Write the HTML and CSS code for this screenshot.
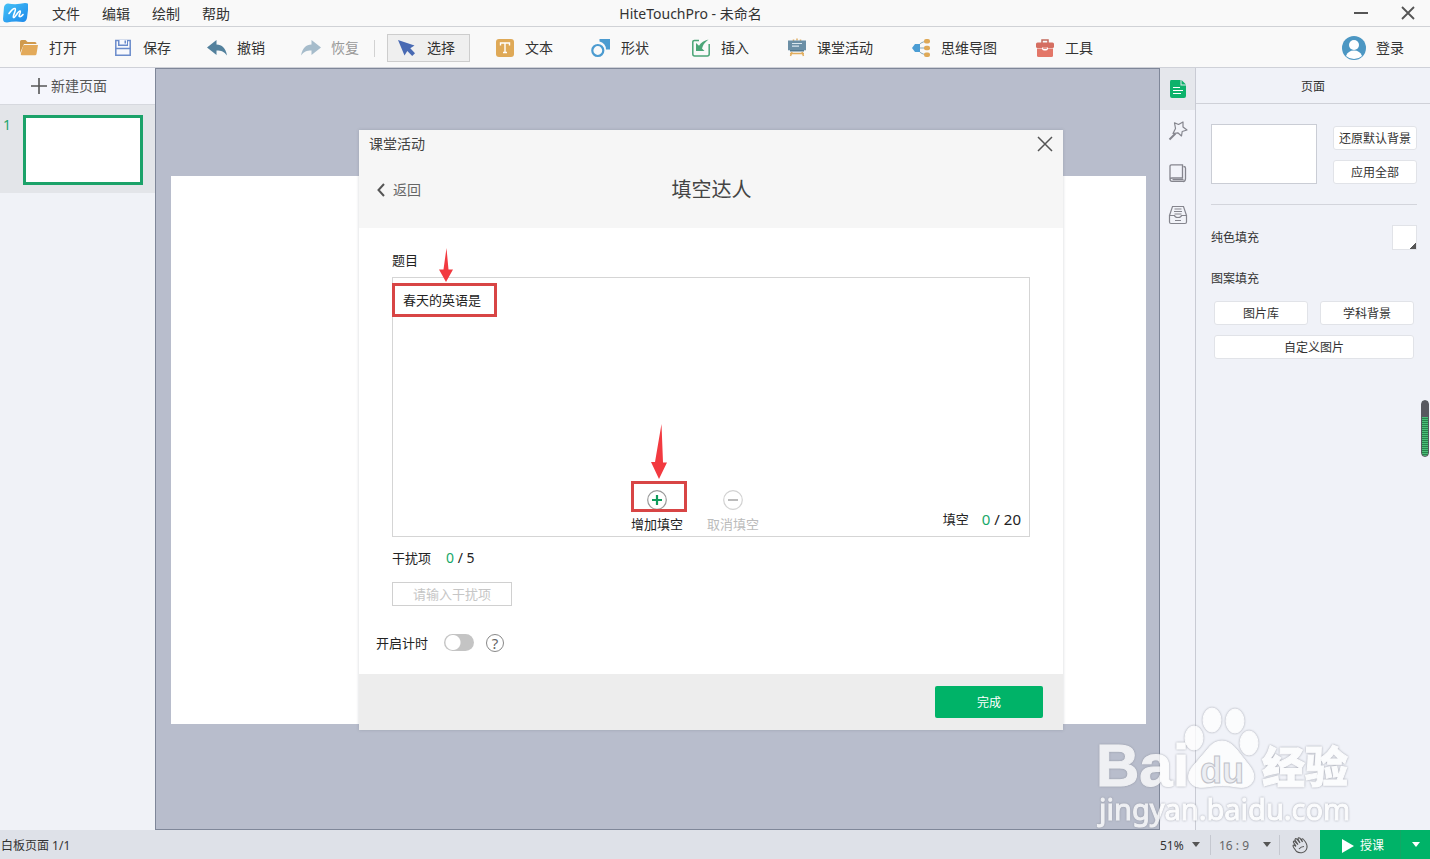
FILE: index.html
```html
<!DOCTYPE html>
<html lang="zh-CN">
<head>
<meta charset="utf-8">
<title>HiteTouchPro - 未命名</title>
<link rel="stylesheet" href="styles.css">
</head>
<body>
<header class="titlebar">
  <svg class="logo" viewBox="0 0 28 26" aria-hidden="true">
    <defs><linearGradient id="logo-fill" x1="0" y1="0" x2="1" y2="1"><stop offset="0" stop-color="#45c3f7"/><stop offset="1" stop-color="#1b86ea"/></linearGradient></defs>
    <path d="M8 3.500Q16 5 25 3q4 0 3.500 3L27 18q-1 4-4 4Q14 21 7 22.500q-4 0-4-3.500L4 7q1-3.500 4-3.500Z" fill="url(#logo-fill)"/>
    <path d="M9 13.500q4-5.500 6-5c2 1-3 8-1.500 9s5-7.500 6.500-6.500-2 5-.5 5.500 2.500-.5 3.500-2" fill="none" stroke="#fff" stroke-width="1.600" stroke-linecap="round"/>
  </svg>
  <nav class="menus">
    <button>文件</button><button>编辑</button><button>绘制</button><button>帮助</button>
  </nav>
  <h1 class="app-title">HiteTouchPro - 未命名</h1>
  <div class="window-controls">
    <button aria-label="最小化"><svg width="16" height="16" viewBox="0 0 16 16"><path d="M1 8h14" stroke="#555" stroke-width="2"/></svg></button>
    <button aria-label="关闭窗口"><svg width="16" height="16" viewBox="0 0 16 16"><path d="M2 2l12 12M14 2 2 14" stroke="#555" stroke-width="1.800"/></svg></button>
  </div>
</header>

<div class="toolbar">
  <div class="tool-group">
    <button class="tool"><svg viewBox="0 0 20 20"><path d="M1 3.500q0-1.500 1.500-1.500h4l2 2h7.500q1.500 0 1.500 2H5L1 15Z" fill="#d09a4d"/><path d="M5.500 7H19l-1.500 9q-.2 1.300-1.500 1.300H3q-1.500 0-1.200-1.500L4 8.200Q4.300 7 5.500 7Z" fill="#e3aa5a"/></svg>打开</button>
    <button class="tool"><svg viewBox="0 0 20 20"><path d="M2.800 2.500H17.200V17.300H2.800Z" fill="#f8f9fd" stroke="#6b8ccb" stroke-width="1.500"/><path d="M5 2h10v6H5Z" fill="#6b8ccb"/><path d="M6.500 2h7.500v4.500H6.500Z" fill="#f8f9fd"/><path d="M11.500 2.500h1.500v3h-1.500Z" fill="#6b8ccb"/><path d="M2.500 10.500h15" stroke="#6b8ccb" stroke-width="1.500"/></svg>保存</button>
    <button class="tool"><svg viewBox="0 0 20 20"><path d="M0 9.500 9.500 2v4.500c5.500 0 9 3.500 10.500 11-3-4-5.500-5-10.500-5V17Z" fill="#53819d"/></svg>撤销</button>
    <button class="tool muted" disabled><svg viewBox="0 0 20 20"><path d="M20 9.500 10.500 2v4.500C5 6.500 1.500 10 0 17.500c3-4 5.500-5 10.500-5V17Z" fill="#a6bccb"/></svg>恢复</button>
  </div>
  <span class="tool-divider"></span>
  <button class="tool selected" aria-pressed="true"><svg viewBox="0 0 20 20"><path d="M1 2l16.500 5.500-4.200 2.800 4.700 5-2.800 2.700-4.900-5-2.800 4.500Z" fill="#496ab3"/></svg>选择</button>
  <div class="tool-group inserts">
    <button class="tool"><svg viewBox="0 0 20 20"><rect x="1" y="1" width="18" height="18" rx="3" fill="#dfa957"/><path d="M5.500 7.500v-2.500h9v2.500M10 5v9.500M8 14.500h4" fill="none" stroke="#fff" stroke-width="1.400"/></svg>文本</button>
    <button class="tool"><svg viewBox="0 0 20 20"><path d="M8.500 1h10.500v10.500h-4a8 8 0 0 0-6.500-8Z" fill="#4b9bd0"/><circle cx="6.800" cy="12.500" r="5.500" fill="none" stroke="#4b9bd0" stroke-width="2.200"/></svg>形状</button>
    <button class="tool spaced"><svg viewBox="0 0 20 20"><path d="M8 2.500H3.500q-1.700 0-1.700 1.500v12q0 2 1.900 2h12.600q1.900 0 1.900-2V6" fill="none" stroke="#4ba577" stroke-width="1.500"/><path d="M5 13V5l3 2.800Q11 3 17.500 1.500 12.500 5 11 10.500L13.500 13Z" fill="#4ba577"/></svg>插入</button>
    <button class="tool"><svg viewBox="0 0 20 20"><path d="M5 14 3.500 18M15 14l1.500 4M3 15.500h14" stroke="#e1ad5d" stroke-width="1.500"/><path d="M6.500 1.500v2M10 .5v2M13.500 1.500v2" stroke="#dfae65" stroke-width="1.500"/><path d="M1 2.500h18v9.800H1Z" fill="#6b8fa6"/><path d="M3 12h14v1.500H3Z" fill="#53788f"/><path d="M5 5.500h10M5 8.200h7" stroke="#dbe8ef" stroke-width="1.200"/></svg>课堂活动</button>
    <button class="tool"><svg viewBox="0 0 20 20"><path d="M16 3.500Q8 3.500 7 10q1 6.500 9 6.500M7 10h9" fill="none" stroke="#88a7b7" stroke-width="1"/><path d="M1 10l3-4h5v8H4Z" fill="#4b9dd4"/><rect x="13" y="1" width="6" height="4.500" rx="2" fill="#dfa957"/><rect x="13" y="7.800" width="6" height="4.500" rx="2" fill="#dfa957"/><rect x="13" y="14.500" width="6" height="4.500" rx="2" fill="#dfa957"/></svg>思维导图</button>
    <button class="tool"><svg viewBox="0 0 20 20"><path d="M7 5V2h6v3" fill="none" stroke="#c36a5c" stroke-width="1.500"/><rect x="1" y="4.500" width="18" height="5.500" rx="1.500" fill="#d56e61"/><path d="M2 10.500h16v7q0 1.500-1.500 1.500h-13Q2 19 2 17.500Z" fill="#e37668"/><path d="M7 9.500h6v1q0 2-2 2H9q-2 0-2-2Z" fill="#fff"/><path d="M8.200 9.500h3.600v1.300H8.200Z" fill="#e37668"/></svg>工具</button>
  </div>
  <button class="tool login"><svg viewBox="0 0 24 24"><circle cx="12" cy="12" r="12" fill="#4c97c3"/><circle cx="12" cy="9" r="5" fill="#fff"/><path d="M4 20q2-5.500 8-5.500t8 5.500q-3.300 3-8 3t-8-3Z" fill="#fff"/></svg>登录</button>
</div>

<main class="workspace">
  <aside class="pages">
    <button class="new-page"><svg width="16" height="16" viewBox="0 0 16 16"><path d="M8 0v16M0 8h16" stroke="#555" stroke-width="1.600"/></svg>新建页面</button>
    <div class="page-item"><span class="page-number">1</span><div class="page-thumb"></div></div>
  </aside>

  <section class="canvas" aria-label="白板"><div class="slide"></div></section>

  <nav class="rail">
    <button class="active" aria-label="页面"><svg viewBox="0 0 20 20"><path d="M3 1h9.500v5.500H18V17q0 2-2 2H4q-2 0-2-2V3Q2 1 3 1Z" fill="#0db26b"/><path d="M13.500 1 18 5.500h-4.500Z" fill="#0db26b"/><path d="M5 8.500h7M5 11.500h10M5 14.500h8" stroke="#fff" stroke-width="1.200"/></svg></button>
    <button aria-label="效果"><svg viewBox="0 0 20 20"><path d="M6.500 1.800 10.500 3.500 15 1v5l4 3-4.800 1.500-.7 4.500-3.700-3.200-4.800.7 2.500-5Z" fill="none" stroke="#85858e" stroke-width="1.200" stroke-linejoin="round"/><path d="M7.500 12.500 1.500 18.500" stroke="#85858e" stroke-width="2"/></svg></button>
    <button aria-label="资源"><svg viewBox="0 0 20 20"><path d="M3.500 1.800h11V15H4q-2 0-2 1.500V3.300q0-1.500 1.500-1.500ZM2 16q0 2.300 2 2.300h11M4.500 16.600H15.500M15.500 3.500q2 0 2 1.500v10.500q0 3-2.500 3" fill="none" stroke="#85858e" stroke-width="1.300"/></svg></button>
    <button aria-label="素材"><svg viewBox="0 0 20 20"><path d="M1.500 10.500 4.500 1.500h11l3 9M1.500 10.500h5q.5 2 3.500 2t3.500-2h5V17q0 1.500-1.500 1.500H3q-1.500 0-1.500-1.500ZM6.500 4h7M6 6.500h8M6.500 9h7M7 15.500h6" fill="none" stroke="#85858e" stroke-width="1.200"/></svg></button>
  </nav>

  <aside class="properties">
    <h2>页面</h2>
    <div class="property-body">
      <div class="background-row">
        <div class="background-preview"></div>
        <div class="background-actions"><button class="plain">还原默认背景</button><button class="plain">应用全部</button></div>
      </div>
      <div class="color-row"><span>纯色填充</span><button class="swatch" aria-label="选择填充颜色"></button></div>
      <p class="pattern-label">图案填充</p>
      <div class="pattern-actions"><button class="plain">图片库</button><button class="plain">学科背景</button><button class="plain full">自定义图片</button></div>
    </div>
    <div class="level"></div>
  </aside>
</main>

<footer class="status">
  <span class="page-count">白板页面 1/1</span>
  <label class="picker zoom"><select aria-label="缩放"><option>51%</option></select><i class="caret"></i></label>
  <label class="picker ratio"><select aria-label="页面比例"><option>16 : 9</option></select><i class="caret"></i></label>
  <button class="hand" aria-label="平移"><svg width="18" height="18" viewBox="0 0 18 18"><path d="M5.500 15.500 3 12q-2-3 0-3l2 1.500M5 10 2.500 6.500q-.5-1.800 1-1.500L7 8.500 4 4q0-2 1.800-1L9 7 7 3q.3-2 2-.8L11.500 6 10.500 3.500q.8-1.500 2 0 4 4.500 3.500 8-.7 4-4.500 5-3.500.7-6-1M8 13q2-2.500 5-2.500" fill="none" stroke="#555" stroke-width="1.100"/></svg></button>
  <button class="teach"><svg width="12" height="14" viewBox="0 0 12 14"><path d="M0 0l12 7-12 7Z" fill="#fff"/></svg>授课</button>
  <button class="teach-more" aria-label="更多授课选项"><i class="caret"></i></button>
</footer>

<div class="overlay">
  <form class="dialog" role="dialog" aria-labelledby="dialog-title">
    <div class="dialog-header">
      <div class="dialog-bar"><span>课堂活动</span><button type="button" aria-label="关闭"><svg width="16" height="16" viewBox="0 0 16 16"><path d="M1 1l14 14M15 1 1 15" stroke="#555" stroke-width="1.500"/></svg></button></div>
      <div class="dialog-heading">
        <button type="button" class="back"><svg width="8" height="14" viewBox="0 0 8 14"><path d="M7 1 1.500 7 7 13" fill="none" stroke="#555" stroke-width="2"/></svg>返回</button>
        <h2 id="dialog-title">填空达人</h2>
      </div>
    </div>
    <div class="dialog-body">
      <label class="question-label" for="question">题目</label>
      <svg class="arrow arrow-question" viewBox="0 0 14 34" aria-hidden="true"><path d="M7.500 0 9.500 21.500H14L7 34 0 21.500h4.500Z" fill="#f23a40"/></svg>
      <div class="question-box">
        <textarea id="question">春天的英语是</textarea>
        <div class="mark mark-question"></div>
        <svg class="arrow arrow-add" viewBox="0 0 16 55" aria-hidden="true"><path d="M10.500 0 12 38.500h4L8 55 0 38h4Z" fill="#f23a40"/></svg>
        <div class="question-footer">
          <div class="blank-actions">
            <button type="button" class="blank-action"><svg width="20" height="20" viewBox="0 0 20 20"><circle cx="10" cy="10" r="9.300" fill="none" stroke="#999" stroke-width="1.200"/><path d="M10 5v10M5 10h10" stroke="#109b5b" stroke-width="2.200"/></svg>增加填空<span class="mark mark-add"></span></button>
            <button type="button" class="blank-action" disabled><svg width="20" height="20" viewBox="0 0 20 20"><circle cx="10" cy="10" r="9.300" fill="none" stroke="#d2d2d2" stroke-width="1.200"/><path d="M5 10h10" stroke="#bbb" stroke-width="2"/></svg>取消填空</button>
          </div>
          <div class="blank-count"><span>填空</span><span class="count-large"><b>0</b> / 20</span></div>
        </div>
      </div>
      <div class="distractor-row"><label for="distractor">干扰项</label><span class="count"><b>0</b> / 5</span></div>
      <input class="distractor" id="distractor" type="text" placeholder="请输入干扰项">
      <div class="timer-row"><label for="timer">开启计时</label><input class="toggle" id="timer" type="checkbox"><button type="button" class="help" aria-label="计时说明">?</button></div>
    </div>
    <div class="dialog-footer"><button type="button" class="done">完成</button></div>
  </form>
</div>

<svg class="watermark" viewBox="0 0 260 126" aria-hidden="true">
  <g class="watermark-ink">
    <text class="wm-bai" x="0" y="82">Bai</text>
    <ellipse cx="98" cy="34" rx="9" ry="12"/><ellipse cx="116" cy="16" rx="9" ry="12"/><ellipse cx="139" cy="17" rx="9" ry="12"/><ellipse cx="153" cy="39" rx="9" ry="12"/>
    <path d="M126 37q8 0 15 9l11 14q8 9 5 17-4 8-16 6-14-3-31 0-13 2-17-7-2-8 6-16l12-14q6-9 15-9Z"/>
    <text class="wm-name" x="166" y="79">经验</text>
    <text class="wm-site" x="3" y="116">jingyan.baidu.com</text>
  </g>
  <text class="wm-du" x="104" y="79">du</text>
</svg>
</body>
</html>
```
FILE: styles.css
```css
* { box-sizing: border-box; }
body {
  margin: 0;
  min-height: 100vh;
  display: flex;
  flex-direction: column;
  background: #f0f2f8;
  color: #333;
  font-family: "Noto Sans", "Noto Sans CJK SC", sans-serif;
  font-size: 14px;
  line-height: 20px;
}
button, input, textarea, select { font: inherit; color: inherit; }
button { margin: 0; padding: 0; border: 0; background: none; white-space: nowrap; }
h1, h2, p { margin: 0; font-weight: 400; }
b { font-weight: 400; color: #16a868; }
svg { display: block; flex: none; }

.titlebar { display: flex; align-items: center; height: 27px; background: #f9f9f9; border-bottom: 1px solid #d0d2d6; }
.logo { width: 28px; height: 26px; }
.menus { display: flex; gap: 22px; padding: 2px 0 0 24px; }
.app-title { flex: 1; padding: 2px 202px 0 0; text-align: center; font-size: 14px; }
.window-controls { display: flex; gap: 31px; padding-right: 14px; }

.toolbar { display: flex; align-items: center; height: 41px; padding: 2px 26px 0 19px; background: #f9f9f9; border-bottom: 1px solid #cfd1d8; }
.tool-group { display: flex; gap: 36px; }
.inserts { gap: 38px; margin-left: 25px; }
.tool { display: flex; align-items: center; gap: 10px; height: 28px; }
.tool svg { width: 20px; height: 20px; }
.spaced { margin-left: 4px; }
.muted { color: #999; }
.tool-divider { width: 1px; height: 17px; margin: 0 12px 0 15px; background: #d2d2d2; }
.selected { padding: 0 14px 0 9px; border: 1px solid #cdcdcd; background: #efefef; }
.login { margin-left: auto; }
.login svg { width: 24px; height: 24px; }

.workspace { flex: 1; display: flex; }
.pages { width: 155px; background: #f0f2f7; }
.new-page { display: flex; align-items: center; gap: 4px; width: 100%; height: 37px; padding-left: 31px; background: #f5f6fc; border-bottom: 1px solid #d6d8de; color: #555; }
.page-item { display: flex; gap: 12px; padding: 10px 12px 8px 3px; background: #e3e5e9; }
.page-number { width: 8px; color: #1fa56d; }
.page-thumb { flex: 1; height: 70px; background: #fff; border: 3px solid #1ba269; }
.canvas { flex: 1; display: flex; align-items: center; padding: 2px 13px 0 15px; background: #b8bdcc; border: 1px solid #7f8799; }
.slide { width: 100%; aspect-ratio: 16 / 9; background: #fff; }
.rail { width: 36px; border-right: 1px solid #c9cbd4; background: #f2f3f9; }
.rail button { display: flex; align-items: center; justify-content: center; width: 100%; height: 42px; }
.rail svg { width: 20px; height: 20px; }
.rail .active { background: #e5e7ec; }

.properties { position: relative; width: 234px; background: #f0f2f8; font-size: 12px; }
.properties h2 { height: 36px; border-bottom: 1px solid #cfd1d8; text-align: center; font-size: 12px; line-height: 38px; }
.property-body { padding: 20px 13px 0 15px; }
.background-row { display: flex; align-items: flex-end; gap: 16px; padding-bottom: 20px; border-bottom: 1px solid #d3d5dc; }
.background-preview { flex: 1; height: 60px; background: #fff; border: 1px solid #cacdd5; }
.background-actions { display: grid; gap: 10px; width: 84px; }
.plain { height: 24px; padding-top: 2px; background: #fff; border: 1px solid #e1e3e8; border-radius: 3px; line-height: 20px; }
.color-row { display: flex; align-items: center; justify-content: space-between; padding-top: 20px; }
.swatch { width: 25px; height: 25px; background: linear-gradient(135deg, transparent 50%, #555 50%) right bottom / 6px 6px no-repeat #fff; border: 1px solid #e1e3e8; }
.pattern-label { padding-top: 19px; }
.pattern-actions { display: grid; grid-template-columns: 1fr 1fr; gap: 10px 12px; padding: 12px 3px 0; }
.full { grid-column: 1 / -1; }
.level { position: absolute; right: 1px; top: 332px; width: 8px; height: 57px; border: 1px solid #58595f; border-radius: 4px; background: linear-gradient(#58595f 16px, transparent 16px), repeating-linear-gradient(#4cbe79 0 1px, #27834a 1px 2px); }

.status { display: flex; align-items: center; height: 29px; background: #dee1e8; font-size: 12px; }
.page-count { flex: 1; padding: 2px 0 0 1px; }
.picker { display: flex; align-items: center; height: 20px; border-right: 1px solid #c5c8d0; }
.picker select { appearance: none; flex: 1; min-width: 0; padding: 2px 0 0; border: 0; background: none; }
.zoom { width: 51px; padding-right: 10px; }
.ratio { width: 69px; padding: 0 8px; color: #666; }
.caret { border: 4px solid transparent; border-top: 5px solid #555; border-bottom: 0; }
.hand { display: flex; justify-content: center; width: 40px; }
.teach { display: flex; align-items: center; gap: 6px; height: 100%; padding: 2px 16px 0 22px; background: #00b368; border-right: 1px solid #12a765; color: #fff; }
.teach-more { display: flex; align-items: center; justify-content: center; width: 29px; height: 100%; background: #00b368; }
.teach-more .caret { border-top-color: #fff; }

.overlay { position: absolute; inset: 0 8px 0 0; display: flex; align-items: center; justify-content: center; }
.dialog { width: 704px; background: #fff; box-shadow: 0 0 3px rgba(80, 84, 100, .25); font-size: 13px; }
.dialog-header { height: 98px; background: #f6f6f6; color: #444; }
.dialog-bar { display: flex; align-items: center; justify-content: space-between; height: 28px; padding: 0 10px; font-size: 14px; }
.dialog-heading { display: grid; grid-template-columns: 1fr auto 1fr; align-items: center; height: 64px; padding: 0 17px 0 18px; }
.dialog-heading h2 { font-size: 20px; }
.back { display: flex; align-items: center; justify-self: start; gap: 8px; color: #666; font-size: 14px; }
.dialog-body { position: relative; padding: 23px 33px 19px; color: #222; line-height: 18px; }
.question-label { display: block; padding-bottom: 8px; }
.question-box { position: relative; display: flex; flex-direction: column; height: 260px; border: 1px solid #d5d5d5; }
.question-box textarea { flex: 1; display: block; width: 100%; padding: 13px 10px; border: 0; background: none; resize: none; outline: 0; }
.question-footer { display: grid; grid-template-columns: 1fr auto 1fr; align-items: end; padding: 0 8px 3px; }
.blank-actions { display: flex; grid-column: 2; gap: 24px; padding-right: 32px; }
.blank-action { position: relative; display: flex; flex-direction: column; align-items: center; gap: 5px; line-height: 18px; }
.blank-action:disabled { color: #bbb; }
.blank-count { display: flex; justify-content: flex-end; gap: 13px; padding-bottom: 5px; }
.count { font-size: 14px; }
.count-large { font-size: 15px; }
.distractor-row { display: flex; gap: 15px; padding: 12px 0 15px; }
.distractor { display: block; width: 120px; height: 24px; padding: 0; border: 1px solid #d0d0d0; border-radius: 0; background: #fff; text-align: center; }
.distractor::placeholder { color: #c6c6c6; opacity: 1; }
.timer-row { display: flex; align-items: center; height: 24px; margin: 25px 0 0 -16px; }
.toggle { appearance: none; width: 30px; height: 17px; margin: 0 12px 0 16px; border-radius: 9px; background: radial-gradient(circle at 9px 50%, #fff 7px, #c4c4c4 8px); }
.help { width: 18px; height: 18px; border: 1px solid #888; border-radius: 50%; color: #666; font-size: 15px; line-height: 16px; }
.dialog-footer { display: flex; justify-content: flex-end; padding: 12px 20px; background: #ededed; }
.done { width: 108px; height: 32px; padding-top: 2px; border-radius: 2px; background: #00b368; color: #fff; font-size: 12px; }

.mark { position: absolute; border: 3px solid #d84545; }
.mark-question { left: -1px; top: 5px; width: 105px; height: 34px; }
.mark-add { left: 0; top: -9px; width: 56px; height: 31px; }
.arrow { position: absolute; z-index: 1; }
.arrow-question { left: 80px; top: 20px; width: 14px; height: 34px; }
.arrow-add { left: 258px; top: 146px; width: 16px; height: 55px; }

.watermark { position: absolute; right: 74px; bottom: 29px; width: 260px; height: 126px; pointer-events: none; }
.watermark-ink { fill: #fff; stroke: #fff; stroke-width: 1px; opacity: .78; filter: drop-shadow(0 0 1px #8c909b); }
.wm-bai { font: bold 60px "Liberation Sans", sans-serif; }
.wm-name { font: 900 43px "Noto Sans CJK SC", sans-serif; }
.wm-site { font: 400 29px "Noto Sans", sans-serif; }
.wm-du { font: bold 36px "Liberation Sans", sans-serif; fill: #eceef3; stroke: #c0c2c9; stroke-width: 1px; }
```
